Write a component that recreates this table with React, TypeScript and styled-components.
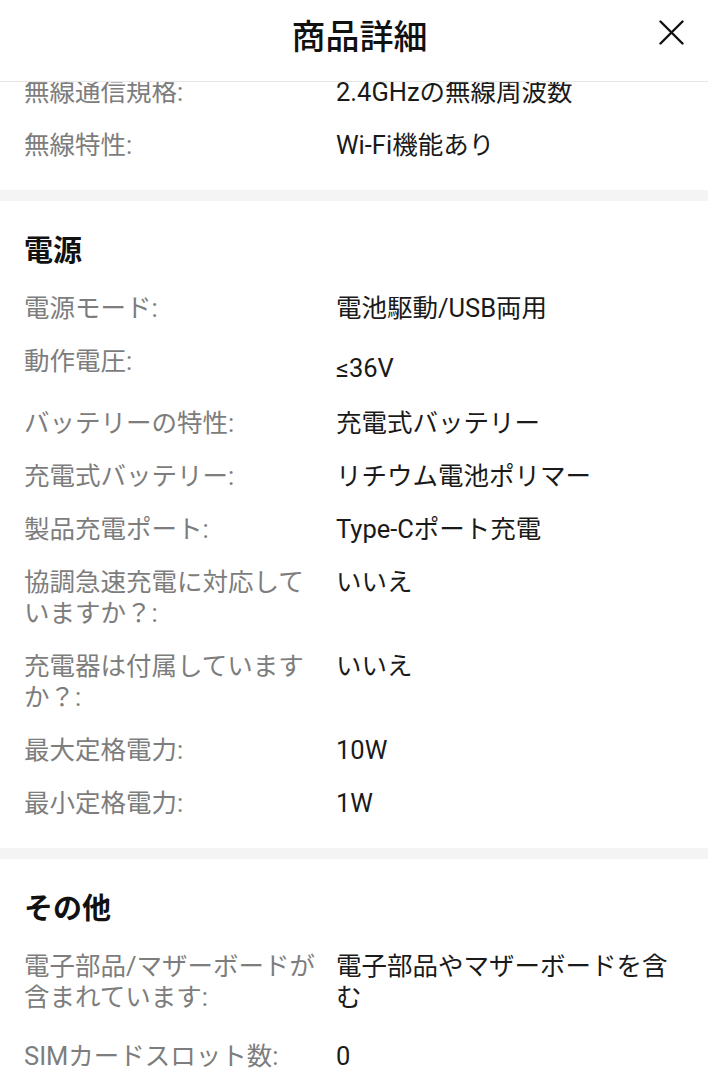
import React from "react";
import styled, { createGlobalStyle } from "styled-components";

const Global = createGlobalStyle`
  html, body { margin: 0; padding: 0; background: #fff; }
  body { font-family: Roboto, "Noto Sans CJK JP", sans-serif; }
  * { box-sizing: border-box; }
`;

const Sheet = styled.div`
  position: relative;
  width: 708px;
  height: 1080px;
  overflow: hidden;
  background: #fff;
  display: flex;
  flex-direction: column;
`;

const CornerArc = styled.svg`
  position: absolute;
  left: 0;
  top: 0;
  width: 10px;
  height: 20px;
`;

const Header = styled.header`
  flex: 0 0 82px;
  position: relative;
  z-index: 2;
  background: #fff;
  border-bottom: 1px solid #e6e6e6;
  display: flex;
  justify-content: center;
  align-items: flex-start;
  padding: 15px 0 0 11px;
`;

const Title = styled.h1`
  margin: 0;
  font-family: "Noto Sans CJK JP", sans-serif;
  font-size: 34px;
  font-weight: 500;
  line-height: 40px;
  color: #111;
`;

const CloseButton = styled.button`
  position: absolute;
  right: 24px;
  top: 19px;
  width: 26px;
  height: 26px;
  padding: 0;
  border: 0;
  background: none;
  display: flex;
  align-items: center;
  justify-content: center;
`;

const Body = styled.div`
  flex: 1;
  overflow: hidden;
  display: flex;
  flex-direction: column;
`;

const Section = styled.section<{ $offset?: number }>`
  display: flex;
  flex-direction: column;
  padding: 29px 24px 29px;
  margin-top: ${(p) => (p.$offset ? `${p.$offset}px` : "0")};
  ${(p) => (p.$offset ? "padding-top: 0;" : "")}
`;

const Band = styled.div`
  height: 11px;
  flex: 0 0 11px;
  background: #f4f4f4;
`;

const Heading = styled.h2`
  margin: 0 0 27px;
  font-family: "Noto Sans CJK JP", sans-serif;
  font-size: 29px;
  font-weight: 700;
  line-height: 36px;
  color: #111;
`;

const Rows = styled.dl<{ $gap?: number }>`
  margin: 0;
  display: flex;
  flex-direction: column;
  gap: ${(p) => p.$gap ?? 22}px;
`;

const Row = styled.div`
  display: grid;
  grid-template-columns: 298px 1fr;
  column-gap: 14px;
`;

const Label = styled.dt`
  margin: 0;
  font-size: 25.5px;
  line-height: 31px;
  color: #7d7d7d;
`;

const Value = styled.dd<{ $low?: boolean }>`
  margin: 0;
  font-size: 25.5px;
  line-height: ${(p) => (p.$low ? "32px" : "31px")};
  color: #1a1a1a;
  padding: ${(p) => (p.$low ? "6px 0 2px" : "0")};
`;

type Item = [string, string];

const wireless: Item[] = [
  ["無線通信規格:", "2.4GHzの無線周波数"],
  ["無線特性:", "Wi-Fi機能あり"],
];

const power: Item[] = [
  ["電源モード:", "電池駆動/USB両用"],
  ["動作電圧:", "≤36V"],
  ["バッテリーの特性:", "充電式バッテリー"],
  ["充電式バッテリー:", "リチウム電池ポリマー"],
  ["製品充電ポート:", "Type-Cポート充電"],
  ["協調急速充電に対応していますか？:", "いいえ"],
  ["充電器は付属していますか？:", "いいえ"],
  ["最大定格電力:", "10W"],
  ["最小定格電力:", "1W"],
];

const other: Item[] = [
  ["電子部品/マザーボードが含まれています:", "電子部品やマザーボードを含む"],
  ["SIMカードスロット数:", "0"],
];

const List = ({ items, gap }: { items: Item[]; gap?: number }) => (
  <Rows $gap={gap}>
    {items.map(([k, v]) => (
      <Row key={k}>
        <Label>{k}</Label>
        <Value $low={v.startsWith("≤")}>{v}</Value>
      </Row>
    ))}
  </Rows>
);

export default function App() {
  return (
    <>
      <Global />
      <Sheet>
        <CornerArc viewBox="0 0 10 20">
          <path d="M0.8 17 Q1.5 6 6.5 0" stroke="#111" strokeWidth="2" fill="none" />
        </CornerArc>
        <Header>
          <Title>商品詳細</Title>
          <CloseButton aria-label="閉じる">
            <svg width="25" height="25" viewBox="0 0 25 25">
              <path d="M1.5 1.5 L23.5 23.5 M23.5 1.5 L1.5 23.5" stroke="#111" strokeWidth="2.4" strokeLinecap="round" />
            </svg>
          </CloseButton>
        </Header>
        <Body>
          <Section $offset={-5}>
            <List items={wireless} />
          </Section>
          <Band />
          <Section>
            <Heading>電源</Heading>
            <List items={power} />
          </Section>
          <Band />
          <Section>
            <Heading>その他</Heading>
            <List items={other} gap={28} />
          </Section>
        </Body>
      </Sheet>
    </>
  );
}
